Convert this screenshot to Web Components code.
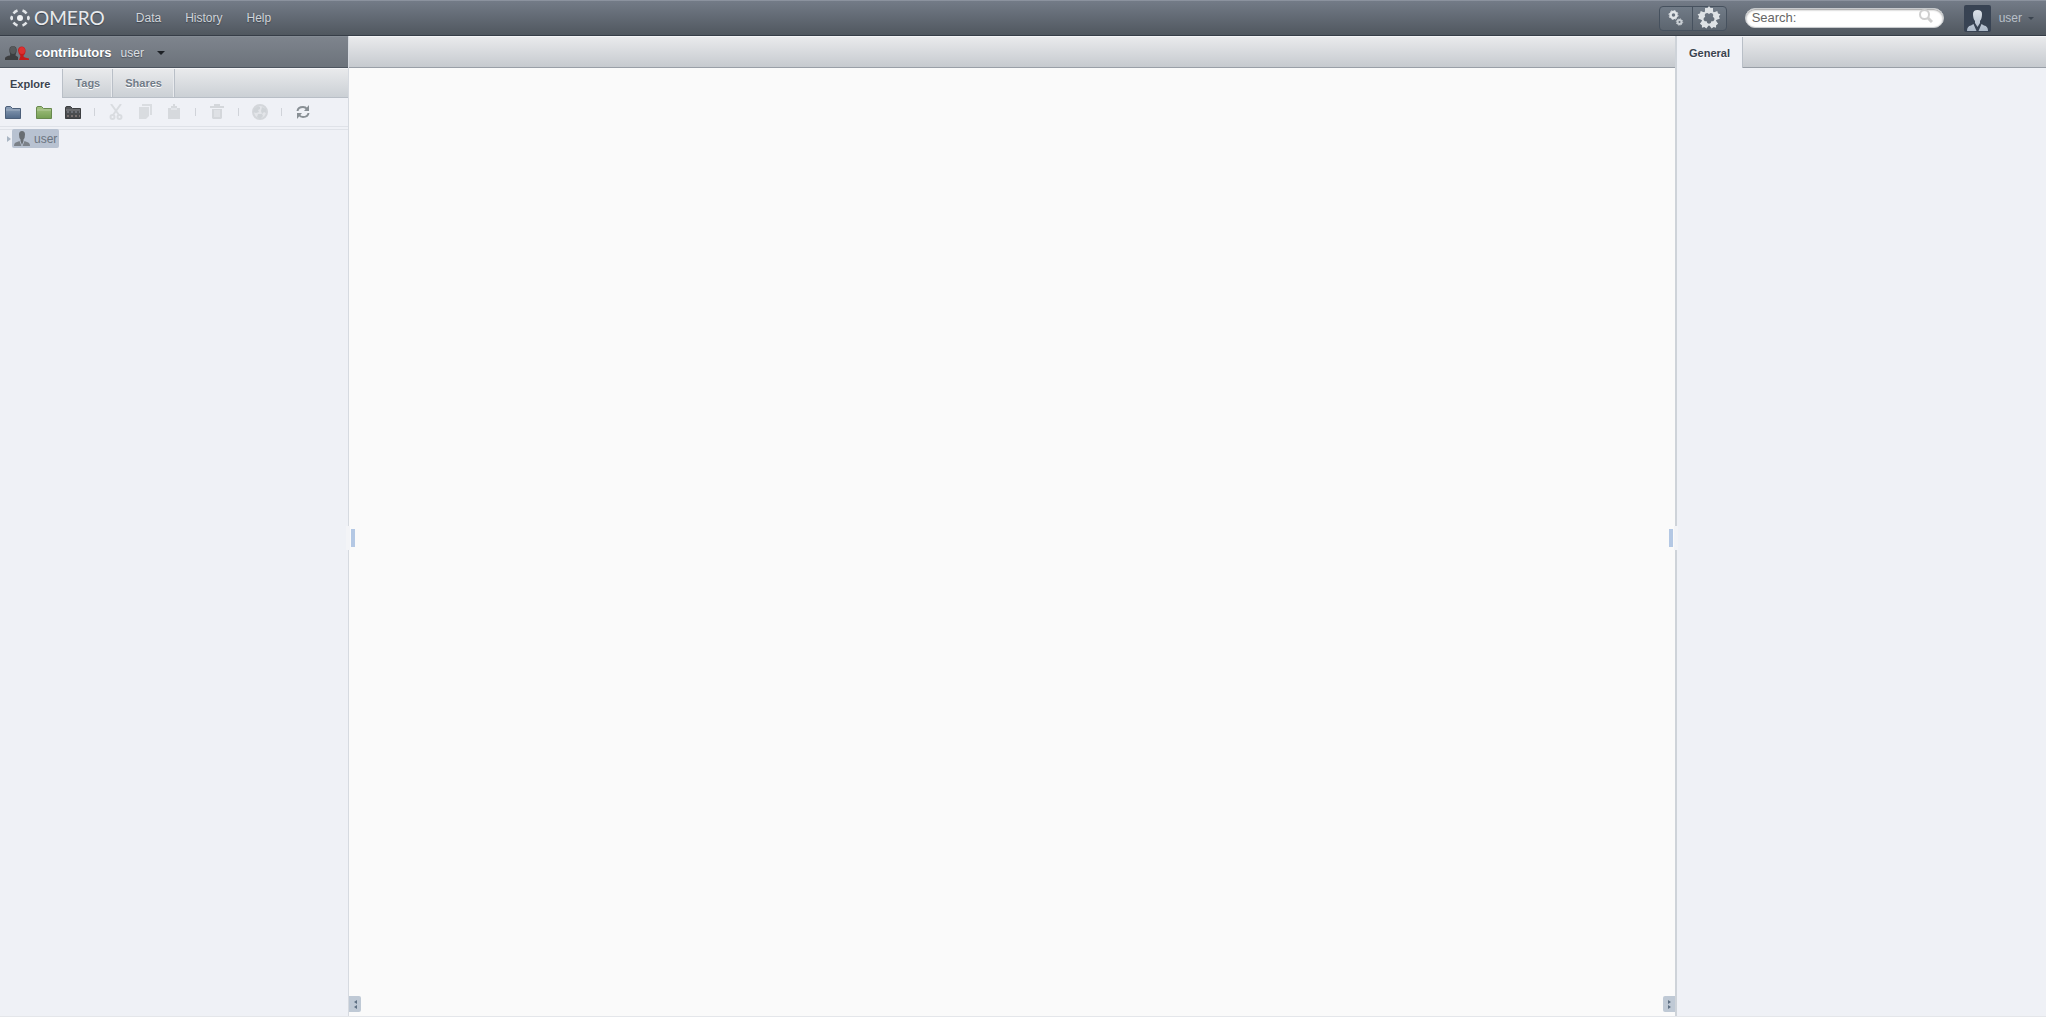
<!DOCTYPE html>
<html lang="en">
<head>
<meta charset="utf-8">
<title>OMERO</title>
<style>
  html, body {
    margin: 0;
    height: 100%;
  }
  body {
    font: 12px/16px "Liberation Sans", Arial, sans-serif;
    background: #eff1f6;
    color: #3a434f;
  }
</style>
</head>
<body>
<omero-app></omero-app>

<script>
const headGradient = "linear-gradient(#e9eaec, #c6cacf)";

class OmeroIcon extends HTMLElement {
  constructor() {
    super();
    this.attachShadow({ mode: "open" });
  }

  connectedCallback() {
    const [w, h, body] = OmeroIcon.shapes[this.getAttribute("name")];
    this.shadowRoot.innerHTML = `
    <style>
      :host { display: inline-flex; flex: none; }
      svg { display: block; }
    </style>
    <svg width="${w}" height="${h}" viewBox="0 0 ${w} ${h}" aria-hidden="true">${body}</svg>`;
  }
}

const folder = (top, low, edge, extra = "") => `
  <linearGradient id="f" x2="0" y2="1"><stop stop-color="${top}"/><stop offset="1" stop-color="${low}"/></linearGradient>
  <path d="M.5 12.500V2Q.5 .5 2 .5H5.500L7.500 2.500H15.500V12.500Z" fill="url(#f)" stroke="${edge}"/>
  <path d="M1 4H15" stroke="#fff" stroke-opacity=".3"/>${extra}`;

const petal = (angle) => `
  <g transform="rotate(${angle} 12 12)"><path d="M12 0L13.500 2H16V4.500L16.500 7.500L13.500 7L12 8L10.500 7L7.500 7.500L8 4.500V2H10.500Z"/></g>`;

OmeroIcon.shapes = {
  mark: [20, 20, `
    <circle cx="10" cy="10" r="3" fill="#f0f2f4"/>
    <path d="M3.500 5.500A8 8 0 0 1 7.500 2.500M12.500 2.500A8 8 0 0 1 16.500 5.500M16.500 14.500A8 8 0 0 1 12.500 17.500M7.500 17.500A8 8 0 0 1 3.500 14.500" fill="none" stroke="#e4e7ea" stroke-width="2.500"/>
    <path d="M0 10L1 7.500L3 8.500V11.500L1 12.500ZM20 10L19 7.500L17 8.500V11.500L19 12.500Z" fill="#e4e7ea"/>`],
  group: [25, 16, `
    <path d="M0 15V13Q1 11 5 10.500Q5.500 9 4.500 7Q3.500 1 8 1Q12.500 1 11.500 7Q10.500 9 10.500 10.500L13 12V15Z" fill="#3c3e40"/>
    <ellipse cx="8" cy="5" rx="3" ry="4" fill="#56595b"/>
    <path d="M14 15L15.500 11Q13 8 13 5Q13.500 1.500 17 1.500Q21 2 20.500 7Q20 9 18.500 10.500Q18 12 20 12.500L24 13.500V15Z" fill="#c41a1a"/>
    <ellipse cx="17" cy="5.500" rx="3" ry="3.500" fill="#dc3030"/>`],
  blueFolder: [16, 13, folder("#8fa2ba", "#526a89", "#4c5f79")],
  greenFolder: [16, 13, folder("#a6c382", "#759f53", "#68894e")],
  screenFolder: [16, 13, folder("#56585a", "#444649", "#3d3f41",
    `<g stroke-width="2" stroke-dasharray="2 2"><path d="M2 6H15" stroke="#6d7077"/><path d="M2 10H15" stroke="#7a716f"/></g>`)],
  cut: [14, 16, `<g fill="none" stroke="#d9dce0" stroke-width="2"><path d="M2 0L10 11M12 0L4 11"/><circle cx="3.500" cy="13" r="2"/><circle cx="10.500" cy="13" r="2"/></g>`],
  copy: [14, 16, `<path d="M4 0H14V11H12V2H4Z" fill="#dadde1"/><path d="M1 3H11V12L8 15H1Z" fill="#d9dce0"/>`],
  paste: [14, 16, `<path d="M1 4H4V2H6V0H8V2H10V4H13V15H1Z" fill="#d6d9dd"/><path d="M4 5H10" stroke="#eff1f6"/>`],
  trash: [14, 16, `<path d="M5 2V1H9V2M0 3H14" fill="none" stroke="#d4d7db" stroke-width="2"/><path d="M2 5H12V14L11 15H3L2 14Z" fill="#d4d7db"/><path d="M5 6V13M7 6V13M9 6V13" stroke="#e9ebef"/>`],
  globe: [16, 16, `<circle cx="8" cy="8" r="7" fill="#e3e5e9" stroke="#d4d7db" stroke-width="2"/><path d="M2 5L6 2L8 3V5L6 6L7 8L4 9L1 8ZM10 3L14 5V9L12 8L10 10L9 7ZM6 10L10 10L11 12L8 15L5 13Z" fill="#d0d4d8"/>`],
  refresh: [14, 14, `<g fill="none" stroke="#899095" stroke-width="2"><path d="M1.500 6Q2 2 7 2Q9.500 2 11 4M12.500 8Q12 12 7 12Q4.500 12 3 10"/></g><path d="M13 0V6H8ZM1 14V8H6Z" fill="#899095"/>`],
  person: [16, 16, `
    <path d="M0 15Q0 11.500 3 11L5.500 10L7.500 15ZM16 15Q16 11.500 13 11L10.500 10L8.500 15Z" fill="#7b8188"/>
    <path d="M5 3.500Q5 0 8 0Q11 0 11 3.500Q11 7 9.500 8.500V10L8 14L6.500 10V8.500Q5 7 5 3.500Z" fill="#686d72"/>`],
  avatar: [27, 27, `
    <rect width="27" height="27" rx="2" fill="#384353"/>
    <linearGradient id="p" x2="0" y2="1"><stop stop-color="#dce1e8"/><stop offset="1" stop-color="#aab7c7"/></linearGradient>
    <path d="M9 9Q9 5 13.500 5Q18 5 18 9Q18 14 16 16V18L13.500 22L11 18V16Q9 14 9 9ZM3 26Q3 21 7 20.500L9.500 19L12.500 26ZM24 26Q24 21 20 20.500L17.500 19L14.500 26Z" fill="url(#p)"/>`],
  gears: [16, 16, `
    <g fill="none" stroke="#e1e5e8"><circle cx="5.500" cy="5" r="3" stroke-width="2.500"/><circle cx="5.500" cy="5" r="4.500" stroke-dasharray="1.750"/>
    <circle cx="11.500" cy="12" r="2" stroke="#c8ced3" stroke-width="2"/><circle cx="11.500" cy="12" r="3.200" stroke="#c8ced3" stroke-dasharray="1.250"/></g>`],
  figure: [24, 24, `<g fill="#dee2e5">${[0, 72, 144, 216, 288].map(petal).join("")}</g>`],
  lens: [14, 14, `<g fill="none" stroke="#cfcfcf" stroke-width="2"><circle cx="5.500" cy="5.500" r="4.500"/><path d="M9 9L13 13" stroke-width="3"/></g>`],
};

class TopBar extends HTMLElement {
  constructor() {
    super();
    this.attachShadow({ mode: "open" });
    this.shadowRoot.innerHTML = `
    <style>
      :host {
        display: flex;
        align-items: center;
        box-sizing: border-box;
        height: 36px;
        padding: 0 12px 0 10px;
        border-top: 1px solid #8b929e;
        border-bottom: 1px solid #363d47;
        background: linear-gradient(#737b87, #50575f);
        color: #d0d4d9;
      }
      a { color: inherit; text-decoration: none; text-shadow: 0 1px 1px #3e454e; }
      .logo {
        display: flex;
        align-items: center;
        gap: 4px;
        font: 19px/20px Lato, sans-serif;
        color: #e8eaed;
      }
      nav { display: flex; gap: 24px; margin-left: 31px; flex: 1; }
      button { border: 0; padding: 0; background: none; font: inherit; color: inherit; }
      .tools {
        display: flex;
        border: 1px solid #46515e;
        border-radius: 4px;
        background: linear-gradient(#717b87, #5c656f);
        margin-right: 18px;
      }
      .tools button {
        display: flex;
        align-items: center;
        justify-content: center;
        width: 32px;
        height: 23px;
      }
      .tools button + button { width: 34px; border-left: 1px solid #46515e; }
      form {
        display: flex;
        align-items: center;
        box-sizing: border-box;
        width: 199px;
        height: 20px;
        padding: 0 10px 0 6px;
        border: 1px solid #c7cacd;
        border-radius: 10px;
        background: #fff;
        box-shadow: inset 0 1px 2px #999;
        font-size: 13px;
        color: #666;
        margin-right: 20px;
      }
      input { flex: 1; min-width: 0; border: 0; padding: 0; background: none; font: inherit; outline: 0; }
      .account { display: flex; align-items: center; gap: 8px; color: #b9c0c9; }
      .caret { margin-left: -2px; border: 3px solid transparent; border-top-color: #3b444f; border-bottom: 0; }
    </style>
    <a class="logo" href="#"><omero-icon name="mark"></omero-icon>OMERO</a>
    <nav><a href="#">Data</a><a href="#">History</a><a href="#">Help</a></nav>
    <div class="tools">
      <button type="button" aria-label="Scripts"><omero-icon name="gears"></omero-icon></button>
      <button type="button" aria-label="Figure"><omero-icon name="figure"></omero-icon></button>
    </div>
    <form>
      <label for="q">Search:</label><input id="q" type="text">
      <button aria-label="Go"><omero-icon name="lens"></omero-icon></button>
    </form>
    <button class="account" type="button">
      <omero-icon name="avatar"></omero-icon><span>user</span><span class="caret"></span>
    </button>`;
  }
}

class TabButton extends HTMLElement {
  constructor() {
    super();
    this.attachShadow({ mode: "open" });
    this.shadowRoot.innerHTML = `
    <style>
      :host { display: flex; }
      button {
        border: 0;
        border-right: 1px solid #b9bfc7;
        padding: 0 12px;
        background: none;
        font: bold 11px/16px "Liberation Sans", Arial, sans-serif;
        color: #717b87;
        text-shadow: 0 1px #fff;
        box-shadow: inset -1px 0 #e8eaed;
      }
      :host([active]) { margin-bottom: -1px; }
      :host([active]) button {
        padding: 0 12px 0 10px;
        background: #eff1f6;
        color: #3a434f;
        box-shadow: none;
      }
    </style>
    <button type="button"><slot></slot></button>`;
  }
}

class TreeToolbar extends HTMLElement {
  constructor() {
    super();
    this.attachShadow({ mode: "open" });
    const items = [
      ["blueFolder", "New project"], ["greenFolder", "New dataset"], ["screenFolder", "New screen"], null,
      ["cut", "Cut"], ["copy", "Copy"], ["paste", "Paste"], null,
      ["trash", "Delete"], null, ["globe", "Share"], null, ["refresh", "Refresh"],
    ];
    const html = items.map((item) => item
      ? `<button type="button" aria-label="${item[1]}"><omero-icon name="${item[0]}"></omero-icon></button>`
      : `<span></span>`).join("");
    this.shadowRoot.innerHTML = `
    <style>
      :host {
        display: flex;
        align-items: center;
        height: 28px;
        border-bottom: 1px solid #dfe2e8;
        margin-bottom: 2px;
        box-shadow: 0 2px #eff1f6, 0 3px #dfe2e8;
      }
      button {
        display: flex;
        align-items: center;
        justify-content: center;
        width: 29px;
        height: 24px;
        padding: 0;
        border: 0;
        background: none;
      }
      button:first-of-type { justify-content: flex-start; padding-left: 5px; }
      span { width: 1px; height: 8px; margin: 0 6px 0 7px; background: #d0d3d9; }
    </style>${html}`;
  }
}

class SidePanel extends HTMLElement {
  constructor() {
    super();
    this.attachShadow({ mode: "open" });
    this.shadowRoot.innerHTML = `
    <style>
      :host {
        display: flex;
        flex-direction: column;
        flex: none;
        width: 348px;
      }
      button { border: 0; padding: 0; }
      .group {
        display: flex;
        align-items: center;
        height: 32px;
        padding: 1px 0 0 5px;
        border-top: 1px solid #858c95;
        border-bottom: 1px solid #4d555f;
        background: linear-gradient(#7e848d, #6c737b);
        color: #dcdfe2;
        font: inherit;
        text-shadow: 0 1px 1px #4b525a;
      }
      strong { margin: 0 9px 0 5px; font-size: 13px; color: #fff; }
      .caret { margin-left: 13px; border: 4px solid transparent; border-top-color: #1d2126; border-bottom: 0; }
      .tabs {
        display: flex;
        height: 28px;
        border-top: 1px solid #f4f5f7;
        border-bottom: 1px solid #b8bec6;
        background: linear-gradient(#e9eaec, #cbd0d5);
      }
      .tree { display: flex; align-items: center; gap: 1px; padding-left: 7px; }
      .arrow { border: 3px solid transparent; border-left: 4px solid #a9b5c3; border-right: 0; }
      a {
        display: flex;
        align-items: center;
        gap: 4px;
        height: 19px;
        padding: 0 2px;
        border-radius: 2px;
        background: #b8c2d1;
        color: #6b7480;
        text-decoration: none;
      }
    </style>
    <button class="group" type="button">
      <omero-icon name="group"></omero-icon><strong>contributors</strong>user<span class="caret"></span>
    </button>
    <div class="tabs">
      <tab-button active>Explore</tab-button><tab-button>Tags</tab-button><tab-button>Shares</tab-button>
    </div>
    <tree-toolbar></tree-toolbar>
    <div class="tree"><span class="arrow"></span><a href="#"><omero-icon name="person"></omero-icon>user</a></div>`;
  }
}

class CenterPanel extends HTMLElement {
  constructor() {
    super();
    this.attachShadow({ mode: "open" });
    this.shadowRoot.innerHTML = `
    <style>
      :host {
        display: flex;
        flex-direction: column;
        flex: 1;
        position: relative;
        border-left: 1px solid #d6dae0;
        border-right: 2px solid #ced3d9;
        background: #fafafa;
      }
      header {
        height: 30px;
        border-top: 1px solid #f4f5f7;
        border-bottom: 1px solid #999fa7;
        background: ${headGradient};
      }
      /* drag grips and collapse buttons float over the splitters */
      i {
        position: absolute;
        top: 50%;
        width: 4px;
        height: 24px;
        background: #f3f4f7;
      }
      i::after {
        content: "";
        position: absolute;
        top: 3px;
        width: 4px;
        height: 18px;
        background: #b4c8e4;
      }
      i.left { left: -3px; }
      i.left::after { left: 5px; }
      i.right { right: -3px; }
      i.right::after { right: 5px; }
      button {
        position: absolute;
        bottom: 4px;
        display: flex;
        flex-direction: column;
        align-items: center;
        justify-content: center;
        gap: 1px;
        width: 12px;
        height: 16px;
        padding: 0;
        border: 0;
        background: #bfc9d5;
      }
      button.left { left: 0; border-radius: 0 2px 2px 0; }
      button.right { right: 0; border-radius: 2px 0 0 2px; }
      b { border: 2px solid transparent; }
      .left b { border-right: 3px solid #5e7083; border-left: 0; }
      .right b { border-left: 3px solid #5e7083; border-right: 0; }
    </style>
    <header></header>
    <i class="left"></i><i class="right"></i>
    <button class="left" type="button" aria-label="Collapse left panel"><b></b><b></b></button>
    <button class="right" type="button" aria-label="Collapse right panel"><b></b><b></b></button>`;
  }
}

class InfoPanel extends HTMLElement {
  constructor() {
    super();
    this.attachShadow({ mode: "open" });
    this.shadowRoot.innerHTML = `
    <style>
      :host { display: block; flex: none; width: 369px; }
      header {
        display: flex;
        height: 30px;
        border-top: 1px solid #f4f5f7;
        border-bottom: 1px solid #999fa7;
        background: ${headGradient};
      }
      tab-button { padding-left: 2px; background: #eff1f6; }
    </style>
    <header><tab-button active>General</tab-button></header>`;
  }
}

class OmeroApp extends HTMLElement {
  constructor() {
    super();
    this.attachShadow({ mode: "open" });
    this.shadowRoot.innerHTML = `
    <style>
      :host {
        display: flex;
        flex-direction: column;
        box-sizing: border-box;
        height: 100vh;
        border-bottom: 1px solid #e4e6ea;
      }
      main { display: flex; flex: 1; }
    </style>
    <top-bar></top-bar>
    <main>
      <side-panel></side-panel>
      <center-panel></center-panel>
      <info-panel></info-panel>
    </main>`;
  }
}

customElements.define("omero-icon", OmeroIcon);
customElements.define("tab-button", TabButton);
customElements.define("tree-toolbar", TreeToolbar);
customElements.define("top-bar", TopBar);
customElements.define("side-panel", SidePanel);
customElements.define("center-panel", CenterPanel);
customElements.define("info-panel", InfoPanel);
customElements.define("omero-app", OmeroApp);
</script>
</body>
</html>
